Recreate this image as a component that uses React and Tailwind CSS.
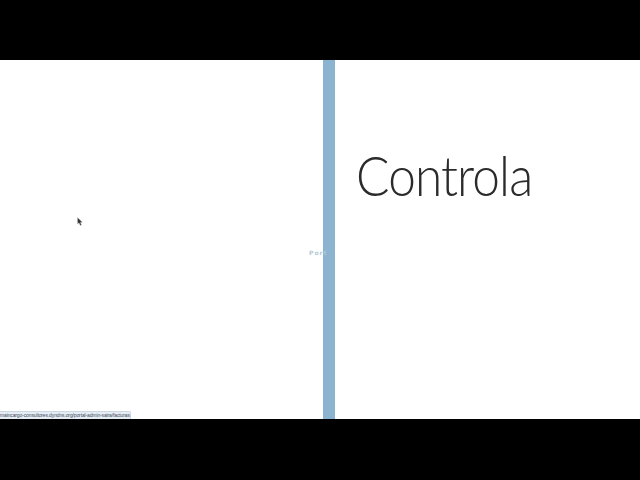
import React from 'react';

const Cursor = () => (
  <svg className="absolute left-[77px] top-[157px]" width="6" height="9" viewBox="0 0 6 9">
    <path d="M0.5 0.5 L0.5 7 L2 5.8 L3.2 8.5 L4.5 8 L3.4 5.4 L5.4 5.2 Z" fill="#333" stroke="#ccc" strokeWidth="0.4" />
  </svg>
);

const App = () => {
  return (
    <div className="w-[640px] h-[480px] overflow-hidden bg-black flex flex-col font-['Lato',sans-serif]">
      <div className="h-[60px] shrink-0 bg-black" />

      <div className="h-[359px] shrink-0 flex bg-white">
        {/* Left panel — label runs up against the bar */}
        <div className="relative w-[323px] shrink-0 flex items-center justify-end">
          <Cursor />
          <span className="w-[14px] shrink-0 mt-[27px] text-[6px] leading-none font-bold tracking-[1px] text-[#b3c9d8] whitespace-nowrap font-['DejaVu_Sans',sans-serif]">
            Port
          </span>

          {/* Browser status tooltip */}
          <div className="absolute left-0 bottom-0 h-[8px] w-[131px] bg-[#e6ecf4] border-t border-r border-[#cdd7e4] rounded-tr-[2px] flex items-center">
            <span className="text-[5px] leading-none tracking-[-0.13px] text-[#3f4a5c] whitespace-nowrap font-['Liberation_Sans',sans-serif]">
              maincargo-consultores.dyndns.org/portal-admin-saira/facturas
            </span>
          </div>
        </div>

        <div className="w-[12px] shrink-0 bg-[#8ab4d0]" />

        {/* Right panel */}
        <div className="flex-1 pl-[21px] pt-[80px]">
          <h1 className="text-[56px] leading-[70px] font-light text-[#2b2b2b] tracking-[-1px] origin-left scale-x-[0.885]">Controla</h1>
        </div>
      </div>

      <div className="flex-1 bg-black" />
    </div>
  );
};

export default App;
